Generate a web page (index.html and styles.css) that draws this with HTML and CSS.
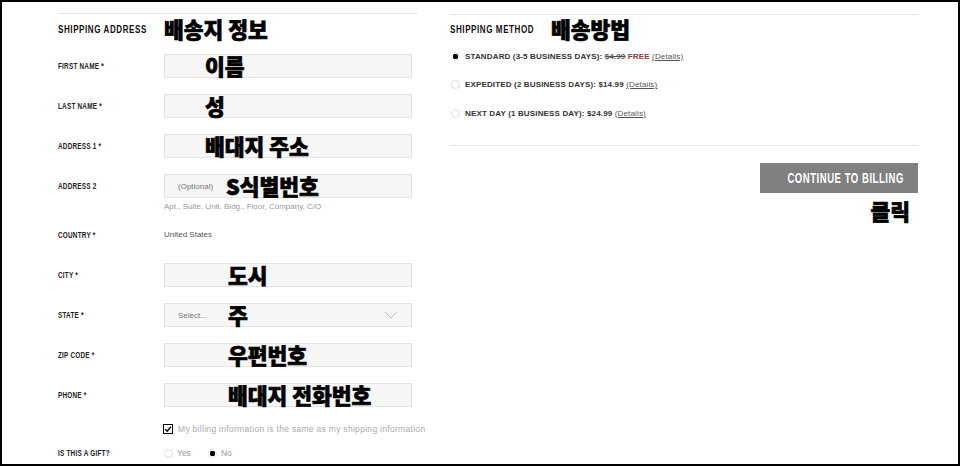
FILE: index.html
```html
<!DOCTYPE html>
<html>
<head>
    <title>Shipping</title>
    <link rel="stylesheet" href="styles.css">
</head>
<body>
    <div class="page">
        <section class="col left">
            <div class="divider"></div>
            <h2 class="section-head">
                <span class="head-en">SHIPPING ADDRESS</span>
                <span class="ko head-ko">배송지 정보</span>
            </h2>

            <div class="row">
                <label><span>FIRST NAME *</span></label>
                <div class="box pad-a"><span class="ko">이름</span></div>
            </div>
            <div class="row">
                <label><span>LAST NAME *</span></label>
                <div class="box pad-a"><span class="ko">성</span></div>
            </div>
            <div class="row">
                <label><span>ADDRESS 1 *</span></label>
                <div class="box pad-a"><span class="ko">배대지 주소</span></div>
            </div>
            <div class="row row-help">
                <label><span>ADDRESS 2</span></label>
                <div class="field">
                    <div class="box pad-s">
                        <span class="hint">(Optional)</span>
                        <span class="ko ko-opt">S식별번호</span>
                    </div>
                    <div class="help">Apt., Suite, Unit, Bldg., Floor, Company, C/O</div>
                </div>
            </div>
            <div class="row">
                <label><span>COUNTRY *</span></label>
                <div class="plain">United States</div>
            </div>
            <div class="row">
                <label><span>CITY *</span></label>
                <div class="box pad-b"><span class="ko">도시</span></div>
            </div>
            <div class="row">
                <label><span>STATE *</span></label>
                <div class="box pad-s select">
                    <span class="hint">Select...</span>
                    <span class="ko ko-sel">주</span>
                    <svg class="chevron" width="14" height="8" viewBox="0 0 14 8">
                        <path d="M1 1 L7 7 L13 1" fill="none" stroke="#bbb" stroke-width="1"/>
                    </svg>
                </div>
            </div>
            <div class="row">
                <label><span>ZIP CODE *</span></label>
                <div class="box pad-b"><span class="ko">우편번호</span></div>
            </div>
            <div class="row">
                <label><span>PHONE *</span></label>
                <div class="box pad-b"><span class="ko">배대지 전화번호</span></div>
            </div>

            <div class="check-row">
                <span class="checkbox">
                    <svg width="8" height="8" viewBox="0 0 8 8">
                        <path d="M1.2 4.2 L3.2 6.2 L6.8 1.8" fill="none" stroke="#000" stroke-width="1.4"/>
                    </svg>
                </span>
                <span class="check-text">My billing information is the same as my shipping information</span>
            </div>

            <div class="row gift">
                <label><span>IS THIS A GIFT?</span></label>
                <div class="choices">
                    <span class="radio"></span><span class="choice-text">Yes</span>
                    <span class="radio on"></span><span class="choice-text">No</span>
                </div>
            </div>
        </section>

        <section class="col right">
            <div class="divider"></div>
            <h2 class="section-head">
                <span class="head-en">SHIPPING METHOD</span>
                <span class="ko head-ko">배송방법</span>
            </h2>

            <div class="option">
                <span class="radio on"></span>
                <span>STANDARD (3-5 BUSINESS DAYS): <s>$4.99</s> <em class="free">FREE</em> <a class="details">(Details)</a></span>
            </div>
            <div class="option">
                <span class="radio"></span>
                <span>EXPEDITED (2 BUSINESS DAYS): $14.99 <a class="details">(Details)</a></span>
            </div>
            <div class="option">
                <span class="radio"></span>
                <span>NEXT DAY (1 BUSINESS DAY): $24.99 <a class="details">(Details)</a></span>
            </div>

            <div class="divider lower"></div>

            <div class="actions">
                <button class="continue"><span>CONTINUE TO BILLING</span></button>
                <div class="ko click">클릭</div>
            </div>
        </section>
    </div>
</body>
</html>
```

FILE: styles.css
```css
body {
    margin: 0;
    background-color: white;
    font-family: "Liberation Sans", Arial, sans-serif;
}

.page {
    width: 960px;
    height: 466px;
    box-sizing: border-box;
    border: 2px solid #000;
    padding-left: 56px;
    display: flex;
    gap: 32px;
    overflow: hidden;
}

.left {
    width: 360px;
}

.right {
    width: 468px;
}

.divider {
    height: 1px;
    background-color: #e6e6e6;
    margin-top: 11px;
}

.right .divider {
    margin-top: 12px;
}

.section-head {
    display: flex;
    align-items: center;
    height: 24px;
    margin: 3px 0 13px;
    font-weight: normal;
    white-space: nowrap;
}

/* no condensed face installed, so squeeze the bold one */
.head-en {
    display: inline-block;
    width: 106px;
    flex: none;
    font-weight: bold;
    font-size: 11px;
    letter-spacing: 0.8px;
    color: #111;
    transform: scaleX(0.73);
    transform-origin: left center;
}

.right .head-en {
    width: 101px;
}

.ko {
    font-family: "Noto Sans CJK KR", sans-serif;
    font-weight: 900;
    font-size: 21.5px;
    line-height: 24px;
    color: #000;
    white-space: nowrap;
    -webkit-text-stroke: 0.7px #000;
}

.right .section-head {
    margin: 2px 0 8px;
}

/* form rows */

.row {
    display: flex;
    align-items: flex-start;
    margin-bottom: 16px;
}

.row label {
    width: 106px;
    flex: none;
    line-height: 24px;
    font-weight: bold;
    font-size: 8.5px;
    letter-spacing: 0.3px;
    color: #222;
    white-space: nowrap;
}

.row label span {
    display: inline-block;
    transform: scaleX(0.75);
    transform-origin: left center;
}

.box {
    width: 248px;
    height: 24px;
    box-sizing: border-box;
    border: 1px solid #e3e3e3;
    background-color: #f6f6f6;
    display: flex;
    align-items: center;
}

.pad-a {
    padding-left: 40px;
}

.pad-b {
    padding-left: 63px;
}

.pad-s {
    padding-left: 13px;
}

.hint {
    font-size: 8px;
    color: #777;
    width: 36px;
}

.ko-opt {
    margin-left: 12px;
}

.ko-sel {
    margin-left: 14px;
}

.select .chevron {
    margin-left: auto;
    margin-right: 13px;
}

.row-help {
    margin-bottom: 11px;
}

.help {
    margin-top: 4px;
    line-height: 10px;
    font-size: 8px;
    color: #999;
}

.plain {
    line-height: 24px;
    font-size: 8px;
    color: #555;
}

/* billing checkbox */

.check-row {
    display: flex;
    align-items: center;
    height: 12px;
    margin: 0 0 6px 105px;
    white-space: nowrap;
}

.checkbox {
    width: 10px;
    height: 10px;
    box-sizing: border-box;
    border: 1.5px solid #000;
    display: flex;
    align-items: center;
    justify-content: center;
    flex: none;
}

.check-text {
    margin-left: 5px;
    font-size: 8.5px;
    letter-spacing: 0.3px;
    color: #aaa;
}

.choices {
    display: flex;
    align-items: center;
    height: 24px;
}

.choice-text {
    font-size: 8.5px;
    color: #999;
    margin-left: 4px;
    margin-right: 17px;
}

.radio {
    width: 9px;
    height: 9px;
    box-sizing: border-box;
    border-radius: 50%;
    border: 1px solid #ddd;
    background-color: white;
    flex: none;
}

.radio.on {
    border-color: #e6e6e6;
    background: radial-gradient(circle, #000 0, #000 2.6px, white 3px);
}

/* shipping method */

.option {
    display: flex;
    align-items: center;
    height: 14px;
    margin-bottom: 14.5px;
    padding-left: 1px;
    gap: 5px;
    font-size: 8px;
    font-weight: bold;
    letter-spacing: 0.15px;
    color: #333;
    white-space: nowrap;
}

.option s {
    color: #555;
}

.free {
    font-style: normal;
    color: #8a3b3b;
}

.details {
    font-weight: normal;
    color: #555;
    text-decoration: underline;
}

.right .lower {
    margin-top: 24.5px;
}

.actions {
    display: flex;
    flex-direction: column;
    align-items: flex-end;
}

.continue {
    margin-top: 17px;
    width: 158px;
    height: 30px;
    border: none;
    background-color: #808080;
    color: white;
    font-family: "Liberation Sans", Arial, sans-serif;
    font-weight: bold;
    font-size: 14px;
    letter-spacing: 0.8px;
    padding: 0;
    white-space: nowrap;
}

.continue span {
    display: inline-block;
    transform: scaleX(0.68);
}

.click {
    margin-top: 6px;
    margin-right: 8px;
}
```
